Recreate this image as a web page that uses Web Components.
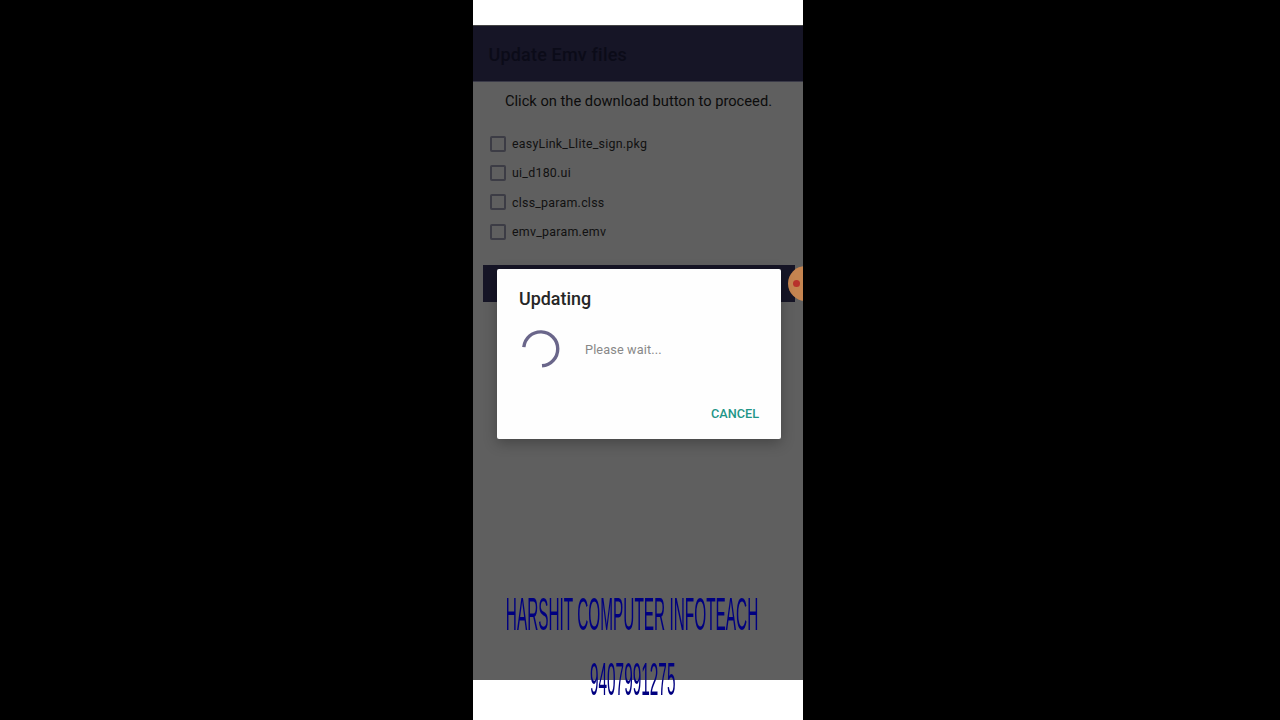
<!DOCTYPE html>
<html>
<head>
<meta charset="utf-8">
<title>Update Emv files</title>
<style>
html, body { margin: 0; height: 100%; background: #000; overflow: hidden; }
body { display: flex; justify-content: center; font-family: Roboto, "Liberation Sans", sans-serif; }
</style>
</head>
<body>
<phone-frame>
	<file-row>easyLink_Llite_sign.pkg</file-row>
	<file-row>ui_d180.ui</file-row>
	<file-row>clss_param.clss</file-row>
	<file-row>emv_param.emv</file-row>
	<progress-dialog slot="dialog" heading="Updating" message="Please wait..." action="CANCEL"></progress-dialog>
	<water-mark slot="mark"></water-mark>
</phone-frame>
<script>
class FileRow extends HTMLElement {
	constructor(){
		super();
		this.attachShadow({ mode: 'open' }).innerHTML = `
			<style>
				:host { display: flex; align-items: center; gap: 6px; height: 29.33px; font-size: 12.4px; color: #111; letter-spacing: .02em; }
				.box { width: 12px; height: 12px; border: 2px solid #3c3c45; border-radius: 2px; flex: none; }
			</style>
			<div class="box"></div><slot></slot>
		`
	}
}
customElements.define('file-row', FileRow)

class ProgressDialog extends HTMLElement {
	constructor(){
		super();
		this.attachShadow({ mode: 'open' }).innerHTML = `
			<style>
				:host { position: absolute; left: 24px; top: 269px; width: 284px; height: 170px; box-sizing: border-box; padding: 19px 22px 0; background: #fefefe; border-radius: 2px; box-shadow: 0 4px 14px rgba(0,0,0,.28); display: flex; flex-direction: column; }
				h2 { margin: 0; font-size: 17.9px; line-height: 21px; font-weight: 500; color: #262626; }
				.body { display: flex; align-items: center; gap: 25px; margin-top: 21px; padding-left: 3px; }
				svg { width: 38px; height: 38px; display: block; }
				.msg { font-size: 12.7px; color: #888; letter-spacing: .01em; }
				.actions { display: flex; justify-content: flex-end; margin-top: 38px; }
				.btn { font-size: 12.7px; font-weight: 500; color: #1f9688; }
			</style>
			<h2></h2>
			<div class="body">
				<svg viewBox="0 0 38 38"><path d="M1.8 17.2A17 17 0 1 1 20 35.8" fill="none" stroke="#6a668a" stroke-width="3.4"/></svg>
				<div class="msg"></div>
			</div>
			<div class="actions"><div class="btn"></div></div>
		`
		this.shadowRoot.querySelector('h2').textContent = this.getAttribute('heading')
		this.shadowRoot.querySelector('.msg').textContent = this.getAttribute('message')
		this.shadowRoot.querySelector('.btn').textContent = this.getAttribute('action')
	}
}
customElements.define('progress-dialog', ProgressDialog)

class WaterMark extends HTMLElement {
	constructor(){
		super();
		this.attachShadow({ mode: 'open' }).innerHTML = `
			<style>
				:host { position: absolute; left: 0; top: 591px; width: 319px; display: flex; flex-direction: column; align-items: center; gap: 19px; font-family: "Liberation Sans", Arial, sans-serif; color: #000080; }
				div { line-height: 46px; font-size: 47px; white-space: nowrap; transform: scaleX(.327); }
			</style>
			<div>HARSHIT COMPUTER INFOTEACH</div>
			<div>9407991275</div>
		`
	}
}
customElements.define('water-mark', WaterMark)

class PhoneFrame extends HTMLElement {
	constructor(){
		super();
		this.attachShadow({ mode: 'open' }).innerHTML = `
			<style>
				:host { display: flex; flex-direction: column; position: relative; width: 330px; height: 720px; margin-left: -4px; background: #fff; overflow: hidden; }
				.status { height: 25px; flex: none; }
				.screen { height: 655px; flex: none; background: #5f5f5f; position: relative; }
				header { height: 57px; box-sizing: border-box; border-top: 1px solid #444; border-bottom: 1px solid #3a3a48; background: #161526; display: flex; align-items: center; padding: 2px 0 0 15.5px; font-size: 18px; font-weight: 500; color: #0b0b18; letter-spacing: .01em; }
				.hint { text-align: center; font-size: 14.7px; line-height: 20px; color: #0c0c0c; margin-top: 9px; padding-left: 1px; }
				.files { padding: 18px 0 0 17px; }
				.download { height: 37px; margin: 19px 8px 0 10px; background: #161526; }
				.fab { position: absolute; left: 315px; top: 241px; width: 35px; height: 35px; border-radius: 50%; background: #c58450; filter: blur(.5px); }
				.fab::after { content: ""; position: absolute; left: 5px; top: 14px; width: 7px; height: 7px; border-radius: 50%; background: #b8322c; }
				.foot { flex: 1; }
			</style>
			<div class="status"></div>
			<div class="screen">
				<header>Update Emv files</header>
				<div class="hint">Click on the download button to proceed.</div>
				<div class="files"><slot></slot></div>
				<div class="download"></div>
				<div class="fab"></div>
			</div>
			<div class="foot"></div>
			<slot name="dialog"></slot>
			<slot name="mark"></slot>
		`
	}
}
customElements.define('phone-frame', PhoneFrame)
</script>
</body>
</html>
